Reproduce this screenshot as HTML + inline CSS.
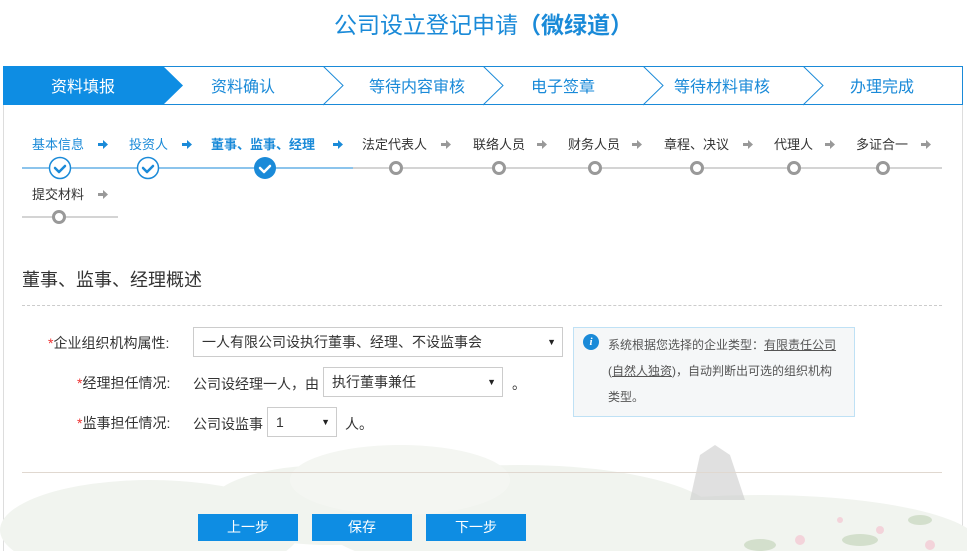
<!DOCTYPE html>
<html><head><meta charset="utf-8"><style>
*{margin:0;padding:0;box-sizing:border-box}
html,body{width:967px;height:551px;overflow:hidden}
body{background:#fff;font-family:"Liberation Sans","Noto Sans CJK SC",sans-serif;position:relative;color:#333}
.a{position:absolute;white-space:nowrap}
.title{left:0;width:967px;top:6px;text-align:center;font-size:23px;color:#1a8ad8}
.sel{border:1px solid #ccc;background:#fff;font-size:14px;padding-left:8px;line-height:28px}
.sel:after{content:"▼";position:absolute;right:6px;font-size:9px;color:#222}
.btn{background:#0e8de3;color:#fff;font-size:14px;text-align:center;line-height:27px;width:100px;height:27px;top:514px}
</style></head><body>
<div class="a" style="left:3px;top:66px;width:1px;height:485px;background:#ddd"></div>
<div class="a" style="left:962px;top:66px;width:1px;height:485px;background:#ddd"></div>
<div class="a title">公司设立登记申请<b>（微绿道）</b></div>
<svg class="a" style="left:3px;top:66px" width="961" height="40">
<rect x="0.5" y="0.5" width="959" height="38" fill="#fff" stroke="#1a8ad8"/>
<polygon points="0,0 160,0 180,19.5 160,39 0,39" fill="#0e8de3"/>
<g fill="none" stroke="#1a8ad8" stroke-width="1"><polyline points="320,0 340,19.5 320,39"/><polyline points="480,0 500,19.5 480,39"/><polyline points="640,0 660,19.5 640,39"/><polyline points="800,0 820,19.5 800,39"/></g>
<g font-size="16" text-anchor="middle" fill="#1a8ad8" font-family="Liberation Sans,Noto Sans CJK SC,sans-serif">
<text x="80" y="26" fill="#fff">资料填报</text><text x="240" y="26">资料确认</text><text x="414" y="26">等待内容审核</text><text x="560" y="26">电子签章</text><text x="719" y="26">等待材料审核</text><text x="879" y="26">办理完成</text></g>
</svg>
<!-- background landscape -->
<svg class="a" style="left:0;top:380px" width="967" height="171">
<g fill="#f1f4ef"><ellipse cx="150" cy="150" rx="150" ry="50"/><ellipse cx="330" cy="125" rx="120" ry="40"/><ellipse cx="520" cy="140" rx="200" ry="55"/><ellipse cx="760" cy="165" rx="220" ry="50"/></g>
<g fill="#f4f6f2"><ellipse cx="400" cy="100" rx="110" ry="35"/></g>
<g fill="#ccc" opacity="0.6"><polygon points="690,120 700,75 715,65 730,75 745,120"/></g>
<g fill="#f3d3da"><circle cx="800" cy="160" r="5"/><circle cx="880" cy="150" r="4"/><circle cx="930" cy="165" r="5"/><circle cx="840" cy="140" r="3"/></g>
<g fill="#d3dfcc"><ellipse cx="860" cy="160" rx="18" ry="6"/><ellipse cx="760" cy="165" rx="16" ry="6"/><ellipse cx="920" cy="140" rx="12" ry="5"/></g>
</svg>
<svg class="a" style="left:0;top:130px" width="967" height="100" font-family="Liberation Sans,Noto Sans CJK SC,sans-serif" font-size="13">
<line x1="22" y1="38" x2="353" y2="38" stroke="#1a8ad8"/><line x1="353" y1="38" x2="942" y2="38" stroke="#aaa"/>
<line x1="22" y1="87" x2="118" y2="87" stroke="#aaa"/>
<g fill="#1a8ad8"><text x="32" y="19">基本信息</text><text x="129" y="19">投资人</text><text x="211" y="19" font-weight="bold">董事、监事、经理</text></g>
<g fill="#333"><text x="362" y="19">法定代表人</text><text x="473" y="19">联络人员</text><text x="568" y="19">财务人员</text><text x="664" y="19">章程、决议</text><text x="774" y="19">代理人</text><text x="856" y="19">多证合一</text><text x="32" y="69">提交材料</text></g>
<g fill="#1a8ad8"><path d="M98 13h5v-3l5 4.5-5 4.5v-3h-5z"/><path d="M182 13h5v-3l5 4.5-5 4.5v-3h-5z"/><path d="M333 13h5v-3l5 4.5-5 4.5v-3h-5z"/></g>
<g fill="#999"><path d="M441 13h5v-3l5 4.5-5 4.5v-3h-5z"/><path d="M537 13h5v-3l5 4.5-5 4.5v-3h-5z"/><path d="M632 13h5v-3l5 4.5-5 4.5v-3h-5z"/><path d="M743 13h5v-3l5 4.5-5 4.5v-3h-5z"/><path d="M825 13h5v-3l5 4.5-5 4.5v-3h-5z"/><path d="M921 13h5v-3l5 4.5-5 4.5v-3h-5z"/><path d="M98 63h5v-3l5 4.5-5 4.5v-3h-5z"/></g>
<g stroke="#1a8ad8" stroke-width="1.5"><circle cx="60" cy="38" r="10.5" fill="#fff"/><circle cx="148" cy="38" r="10.5" fill="#fff"/></g>
<circle cx="265" cy="38" r="11" fill="#1a8ad8"/>
<g fill="none" stroke-width="2.5" stroke-linecap="round" stroke-linejoin="round"><path d="M55 38l4 4 6-6" stroke="#1a8ad8"/><path d="M143 38l4 4 6-6" stroke="#1a8ad8"/><path d="M260 38l4 4 6-6" stroke="#fff"/></g>
<g fill="#fff" stroke="#999" stroke-width="3"><circle cx="396" cy="38" r="5.5"/><circle cx="499" cy="38" r="5.5"/><circle cx="595" cy="38" r="5.5"/><circle cx="697" cy="38" r="5.5"/><circle cx="794" cy="38" r="5.5"/><circle cx="883" cy="38" r="5.5"/><circle cx="59" cy="87" r="5.5"/></g>
</svg>
<div class="a" style="left:22px;top:266px;font-size:18px;color:#333">董事、监事、经理概述</div>
<div class="a" style="left:22px;top:305px;width:920px;border-top:1px dashed #ccc"></div>
<div class="a" style="left:48px;top:333px;font-size:14px"><span style="color:#e33">*</span>企业组织机构属性:</div>
<div class="a sel" style="left:193px;top:327px;width:370px;height:30px">一人有限公司设执行董事、经理、不设监事会</div>
<div class="a" style="left:77px;top:373px;font-size:14px"><span style="color:#e33">*</span>经理担任情况:</div>
<div class="a" style="left:193px;top:374px;font-size:14px">公司设经理一人，由</div>
<div class="a sel" style="left:323px;top:367px;width:180px;height:30px">执行董事兼任</div>
<div class="a" style="left:512px;top:374px;font-size:14px">。</div>
<div class="a" style="left:77px;top:413px;font-size:14px"><span style="color:#e33">*</span>监事担任情况:</div>
<div class="a" style="left:193px;top:414px;font-size:14px">公司设监事</div>
<div class="a sel" style="left:267px;top:407px;width:70px;height:30px">1</div>
<div class="a" style="left:345px;top:414px;font-size:14px">人。</div>
<div class="a" style="left:573px;top:327px;width:282px;height:90px;background:#f5f7f8;border:1px solid #bfe1f5;font-size:12px;line-height:26px;padding:4px 16px 0 34px;white-space:normal;color:#555">系统根据您选择的企业类型：<u>有限责任公司</u>(<u>自然人独资</u>)，自动判断出可选的组织机构类型。</div>
<div class="a" style="left:583px;top:334px;width:16px;height:16px;border-radius:50%;background:#1a8ad8;color:#fff;font-size:11px;font-style:italic;font-weight:bold;text-align:center;line-height:16px;font-family:'Liberation Serif',serif">i</div>
<div class="a" style="left:22px;top:472px;width:920px;border-top:1px solid #e0d8d0"></div>
<div class="a btn" style="left:198px">上一步</div>
<div class="a btn" style="left:312px">保存</div>
<div class="a btn" style="left:426px">下一步</div>
</body></html>
